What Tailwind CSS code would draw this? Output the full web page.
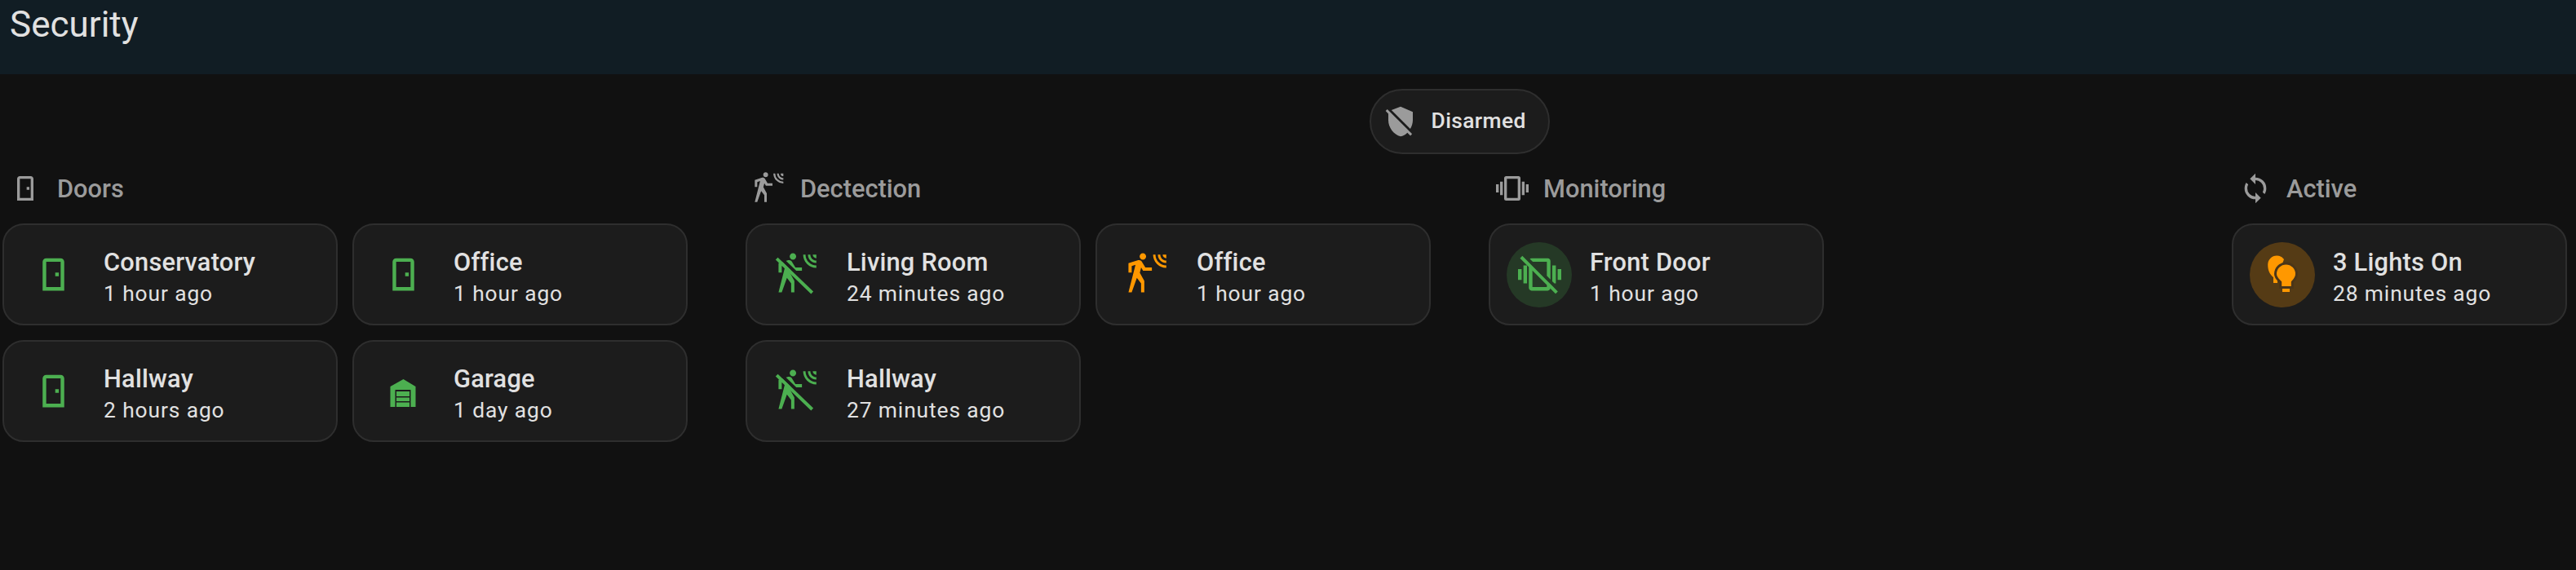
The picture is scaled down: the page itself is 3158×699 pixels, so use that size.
<!DOCTYPE html>
<html lang="en">
<head>
  <meta charset="UTF-8" />
  <title>Security</title>
  <script src="https://cdn.jsdelivr.net/npm/@tailwindcss/browser@4"></script>
</head>
<body class="bg-[#111111] h-[699px] overflow-hidden font-[Roboto,sans-serif]">

  <header class="h-[91px] bg-[#111d24] pl-3 pt-[6px] text-[44px] leading-[48px] text-[#e1e1e1]">Security</header>

  <main class="w-[3575px] pl-[3px] pt-[18px]">
    <!-- Alarm chip -->
    <div class="flex justify-center">
      <div class="flex items-center h-[80px] w-[221px] pl-[16px] gap-[18px] rounded-full border-2 border-[#2e2e2e] bg-[#1c1c1c]">
        <svg class="size-10 fill-[#9b9b9b]" viewBox="0 0 24 24"><path d="M1,4.27L2.28,3L20.5,21.22L19.22,22.5L17,20.25C15.54,21.78 13.9,22.54 12,23C7,21.78 3,16.5 3,11V6.27L1,4.27M12,1L21,5V11C21,13.28 20.32,15.5 19.14,17.39L5.3,3.55L12,1Z" /></svg>
        <span class="text-[26.4px] tracking-[0.4px] font-medium text-[#e1e1e1]">Disarmed</span>
      </div>
    </div>

    <div class="grid grid-cols-[840px_840px_840px_411px] gap-x-[71px] mt-[22px]">

      <!-- Doors -->
      <section>
        <h2 class="flex items-center gap-[19px] h-10 pl-[8px] text-[30.8px] font-medium text-[#9b9b9b]">
          <svg class="size-10 fill-[#9b9b9b]" viewBox="0 0 24 24"><path d="M8,3C6.89,3 6,3.89 6,5V21H18V5C18,3.89 17.11,3 16,3H8M8,5H16V19H8V5M13,11V13H15V11H13Z" /></svg>
          <span class="mt-[2px]">Doors</span>
        </h2>
        <div class="grid grid-cols-[411px_411px] gap-[18px] mt-[23px]">
          <div class="flex items-center h-[125px] pl-[20px] gap-[22px] rounded-[26px] border-2 border-[#2e2e2e] bg-[#1c1c1c]">
            <div class="flex items-center justify-center size-20"><svg class="size-[53px] fill-[#4caf50]" viewBox="0 0 24 24"><path d="M8,3C6.89,3 6,3.89 6,5V21H18V5C18,3.89 17.11,3 16,3H8M8,5H16V19H8V5M13,11V13H15V11H13Z" /></svg></div>
            <div class="pt-[8px]"><p class="text-[30.8px] leading-[38px] font-medium tracking-[0.22px] text-[#e1e1e1]">Conservatory</p><p class="text-[26.4px] leading-[38px] tracking-[0.88px] text-[#e1e1e1]">1 hour ago</p></div>
          </div>
          <div class="flex items-center h-[125px] pl-[20px] gap-[22px] rounded-[26px] border-2 border-[#2e2e2e] bg-[#1c1c1c]">
            <div class="flex items-center justify-center size-20"><svg class="size-[53px] fill-[#4caf50]" viewBox="0 0 24 24"><path d="M8,3C6.89,3 6,3.89 6,5V21H18V5C18,3.89 17.11,3 16,3H8M8,5H16V19H8V5M13,11V13H15V11H13Z" /></svg></div>
            <div class="pt-[8px]"><p class="text-[30.8px] leading-[38px] font-medium tracking-[0.22px] text-[#e1e1e1]">Office</p><p class="text-[26.4px] leading-[38px] tracking-[0.88px] text-[#e1e1e1]">1 hour ago</p></div>
          </div>
          <div class="flex items-center h-[125px] pl-[20px] gap-[22px] rounded-[26px] border-2 border-[#2e2e2e] bg-[#1c1c1c]">
            <div class="flex items-center justify-center size-20"><svg class="size-[53px] fill-[#4caf50]" viewBox="0 0 24 24"><path d="M8,3C6.89,3 6,3.89 6,5V21H18V5C18,3.89 17.11,3 16,3H8M8,5H16V19H8V5M13,11V13H15V11H13Z" /></svg></div>
            <div class="pt-[8px]"><p class="text-[30.8px] leading-[38px] font-medium tracking-[0.22px] text-[#e1e1e1]">Hallway</p><p class="text-[26.4px] leading-[38px] tracking-[0.88px] text-[#e1e1e1]">2 hours ago</p></div>
          </div>
          <div class="flex items-center h-[125px] pl-[20px] gap-[22px] rounded-[26px] border-2 border-[#2e2e2e] bg-[#1c1c1c]">
            <div class="flex items-center justify-center size-20">
              <svg class="size-[53px]" viewBox="0 0 53 53">
                <path fill="#4caf50" d="M26.5,12L41.5,21V46H10.5V21Z" />
                <rect fill="#1c1c1c" x="16.5" y="25" width="19" height="21" />
                <rect fill="#4caf50" x="18" y="27" width="16" height="6" />
                <rect fill="#4caf50" x="18" y="34.5" width="16" height="4.5" />
                <rect fill="#4caf50" x="18" y="40.5" width="16" height="5.5" />
              </svg>
            </div>
            <div class="pt-[8px]"><p class="text-[30.8px] leading-[38px] font-medium tracking-[0.22px] text-[#e1e1e1]">Garage</p><p class="text-[26.4px] leading-[38px] tracking-[0.88px] text-[#e1e1e1]">1 day ago</p></div>
          </div>
        </div>
      </section>

      <!-- Detection -->
      <section>
        <h2 class="flex items-center gap-[19px] h-10 pl-[8px] text-[30.8px] font-medium text-[#9b9b9b]">
          <svg class="size-10 fill-[#9b9b9b]" viewBox="0 0 24 24"><path d="M10,0.2C9,0.2 8.2,1 8.2,2C8.2,3 9,3.8 10,3.8C11,3.8 11.8,3 11.8,2C11.8,1 11,0.2 10,0.2M15.67,1A7.33,7.33 0 0,0 23,8.33V7A6,6 0 0,1 17,1H15.67M18.33,1C18.33,3.58 20.42,5.67 23,5.67V4.33C21.16,4.33 19.67,2.84 19.67,1H18.33M21,1A2,2 0 0,0 23,3V1H21M7.92,4.03C7.75,4.03 7.58,4.06 7.42,4.11L2,5.8V11H3.8V7.33L5.91,6.67L2,22H3.8L6.67,13.89L9,17V22H10.8V15.59L8.31,11.05L9.04,8.18L10.12,10H15V8.2H11.38L9.38,4.87C9.08,4.37 8.54,4.03 7.92,4.03Z" /></svg>
          <span class="mt-[2px]">Dectection</span>
        </h2>
        <div class="grid grid-cols-[411px_411px] gap-[18px] mt-[23px]">
          <div class="flex items-center h-[125px] pl-[20px] gap-[22px] rounded-[26px] border-2 border-[#2e2e2e] bg-[#1c1c1c]">
            <div class="flex items-center justify-center size-20">
              <svg class="size-[53px] fill-[#4caf50]" viewBox="0 0 24 24">
                <path d="M10,0.2C9,0.2 8.2,1 8.2,2C8.2,3 9,3.8 10,3.8C11,3.8 11.8,3 11.8,2C11.8,1 11,0.2 10,0.2M15.67,1A7.33,7.33 0 0,0 23,8.33V7A6,6 0 0,1 17,1H15.67M18.33,1C18.33,3.58 20.42,5.67 23,5.67V4.33C21.16,4.33 19.67,2.84 19.67,1H18.33M21,1A2,2 0 0,0 23,3V1H21M7.92,4.03C7.75,4.03 7.58,4.06 7.42,4.11L2,5.8V11H3.8V7.33L5.91,6.67L2,22H3.8L6.67,13.89L9,17V22H10.8V15.59L8.31,11.05L9.04,8.18L10.12,10H15V8.2H11.38L9.38,4.87C9.08,4.37 8.54,4.03 7.92,4.03Z" />
                <path d="M2.2,1.9L22,21" stroke="#1c1c1c" stroke-width="1.8" />
                <path d="M1,3.2L20.7,22.2" stroke="#4caf50" stroke-width="1.8" />
              </svg>
            </div>
            <div class="pt-[8px]"><p class="text-[30.8px] leading-[38px] font-medium tracking-[0.22px] text-[#e1e1e1]">Living Room</p><p class="text-[26.4px] leading-[38px] tracking-[0.88px] text-[#e1e1e1]">24 minutes ago</p></div>
          </div>
          <div class="flex items-center h-[125px] pl-[20px] gap-[22px] rounded-[26px] border-2 border-[#2e2e2e] bg-[#1c1c1c]">
            <div class="flex items-center justify-center size-20"><svg class="size-[53px] fill-[#ff9800]" viewBox="0 0 24 24"><path d="M10,0.2C9,0.2 8.2,1 8.2,2C8.2,3 9,3.8 10,3.8C11,3.8 11.8,3 11.8,2C11.8,1 11,0.2 10,0.2M15.67,1A7.33,7.33 0 0,0 23,8.33V7A6,6 0 0,1 17,1H15.67M18.33,1C18.33,3.58 20.42,5.67 23,5.67V4.33C21.16,4.33 19.67,2.84 19.67,1H18.33M21,1A2,2 0 0,0 23,3V1H21M7.92,4.03C7.75,4.03 7.58,4.06 7.42,4.11L2,5.8V11H3.8V7.33L5.91,6.67L2,22H3.8L6.67,13.89L9,17V22H10.8V15.59L8.31,11.05L9.04,8.18L10.12,10H15V8.2H11.38L9.38,4.87C9.08,4.37 8.54,4.03 7.92,4.03Z" /></svg></div>
            <div class="pt-[8px]"><p class="text-[30.8px] leading-[38px] font-medium tracking-[0.22px] text-[#e1e1e1]">Office</p><p class="text-[26.4px] leading-[38px] tracking-[0.88px] text-[#e1e1e1]">1 hour ago</p></div>
          </div>
          <div class="flex items-center h-[125px] pl-[20px] gap-[22px] rounded-[26px] border-2 border-[#2e2e2e] bg-[#1c1c1c]">
            <div class="flex items-center justify-center size-20">
              <svg class="size-[53px] fill-[#4caf50]" viewBox="0 0 24 24">
                <path d="M10,0.2C9,0.2 8.2,1 8.2,2C8.2,3 9,3.8 10,3.8C11,3.8 11.8,3 11.8,2C11.8,1 11,0.2 10,0.2M15.67,1A7.33,7.33 0 0,0 23,8.33V7A6,6 0 0,1 17,1H15.67M18.33,1C18.33,3.58 20.42,5.67 23,5.67V4.33C21.16,4.33 19.67,2.84 19.67,1H18.33M21,1A2,2 0 0,0 23,3V1H21M7.92,4.03C7.75,4.03 7.58,4.06 7.42,4.11L2,5.8V11H3.8V7.33L5.91,6.67L2,22H3.8L6.67,13.89L9,17V22H10.8V15.59L8.31,11.05L9.04,8.18L10.12,10H15V8.2H11.38L9.38,4.87C9.08,4.37 8.54,4.03 7.92,4.03Z" />
                <path d="M2.2,1.9L22,21" stroke="#1c1c1c" stroke-width="1.8" />
                <path d="M1,3.2L20.7,22.2" stroke="#4caf50" stroke-width="1.8" />
              </svg>
            </div>
            <div class="pt-[8px]"><p class="text-[30.8px] leading-[38px] font-medium tracking-[0.22px] text-[#e1e1e1]">Hallway</p><p class="text-[26.4px] leading-[38px] tracking-[0.88px] text-[#e1e1e1]">27 minutes ago</p></div>
          </div>
        </div>
      </section>

      <!-- Monitoring -->
      <section>
        <h2 class="flex items-center gap-[18px] h-10 pl-[9px] text-[30.8px] font-medium text-[#9b9b9b]">
          <svg class="size-10 fill-[#9b9b9b]" viewBox="0 0 24 24"><path d="M16,19H8V5H16M16.5,3H7.5A1.5,1.5 0 0,0 6,4.5V19.5A1.5,1.5 0 0,0 7.5,21H16.5A1.5,1.5 0 0,0 18,19.5V4.5A1.5,1.5 0 0,0 16.5,3M19,17H21V7H19M22,9V15H24V9M3,17H5V7H3M0,15H2V9H0V15Z" /></svg>
          <span class="mt-[2px]">Monitoring</span>
        </h2>
        <div class="grid grid-cols-[411px_411px] gap-[18px] mt-[23px]">
          <div class="flex items-center h-[125px] pl-[20px] gap-[22px] rounded-[26px] border-2 border-[#2e2e2e] bg-[#1c1c1c]">
            <div class="flex items-center justify-center size-20 rounded-full bg-[#4caf50]/20">
              <svg class="size-[53px] fill-[#4caf50]" viewBox="0 0 24 24"><path d="M8.2,5L6.55,3.35C6.81,3.12 7.15,3 7.5,3H16.5C17.33,3 18,3.67 18,4.5V14.8L16,12.8V5H8.2M0,15H2V9H0V15M21,17V7H19V15.8L20.2,17H21M3,17H5V7H3V17M18,17.35L22.11,21.46L20.84,22.73L18,19.89V19.5C18,20.33 17.33,21 16.5,21H7.5C6.67,21 6,20.33 6,19.5V7.89L1.11,3L2.39,1.73L6.09,5.44L8,7.35L16,15.35L18,17.35M16,17.89L8,9.89V19H16V17.89M22,9V15H24V9H22Z" /></svg>
            </div>
            <div class="pt-[8px]"><p class="text-[30.8px] leading-[38px] font-medium tracking-[0.22px] text-[#e1e1e1]">Front Door</p><p class="text-[26.4px] leading-[38px] tracking-[0.88px] text-[#e1e1e1]">1 hour ago</p></div>
          </div>
        </div>
      </section>

      <!-- Active -->
      <section>
        <h2 class="flex items-center gap-[18px] h-10 pl-[9px] text-[30.8px] font-medium text-[#9b9b9b]">
          <svg class="size-10 fill-[#9b9b9b]" viewBox="0 0 24 24"><path d="M12,18A6,6 0 0,1 6,12C6,11 6.25,10.03 6.7,9.2L5.24,7.74C4.46,8.97 4,10.43 4,12A8,8 0 0,0 12,20V23L16,19L12,15M12,4V1L8,5L12,9V6A6,6 0 0,1 18,12C18,13 17.75,13.97 17.3,14.8L18.76,16.26C19.54,15.03 20,13.57 20,12A8,8 0 0,0 12,4Z" /></svg>
          <span class="mt-[2px]">Active</span>
        </h2>
        <div class="mt-[23px]">
          <div class="flex items-center h-[125px] pl-[20px] gap-[22px] rounded-[26px] border-2 border-[#2e2e2e] bg-[#1c1c1c]">
            <div class="flex items-center justify-center size-20 rounded-full bg-[#ff9800]/25">
              <svg class="size-[53px]" viewBox="0 0 53 53">
                <path fill="#ff9800" d="M19.2,3.5A11,11 0 0,1 28,8L20,30L20,37H15V30C11,27 8.2,22 8.2,14.5A11,11 0 0,1 19.2,3.5Z" />
                <path fill="#ff9800" stroke="#4a3518" stroke-width="3" d="M30.5,13A13,13 0 0,1 43.5,26C43.5,31 40,34 38.3,36V42.5H23.7V36C22,34 17.5,31 17.5,26A13,13 0 0,1 30.5,13Z" />
                <rect fill="#ff9800" x="26" y="44" width="9" height="4" />
              </svg>
            </div>
            <div class="pt-[8px]"><p class="text-[30.8px] leading-[38px] font-medium tracking-[0.22px] text-[#e1e1e1]">3 Lights On</p><p class="text-[26.4px] leading-[38px] tracking-[0.88px] text-[#e1e1e1]">28 minutes ago</p></div>
          </div>
        </div>
      </section>

    </div>
  </main>

</body>
</html>
